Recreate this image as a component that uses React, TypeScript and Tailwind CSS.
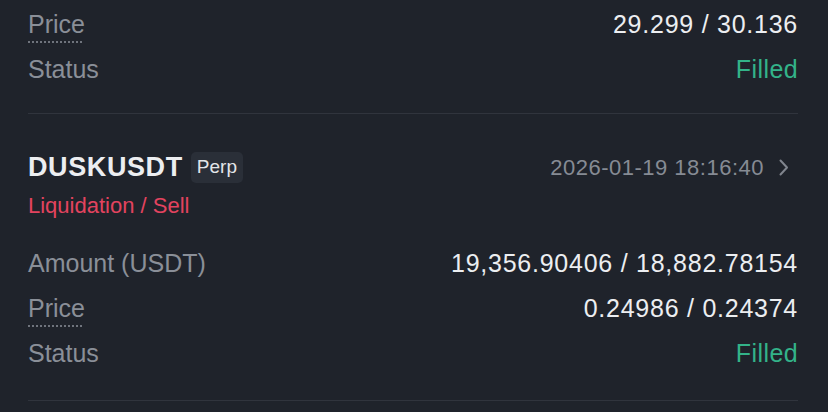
import React from 'react'

type Row = { label: string; value: string; dotted?: boolean; tone?: 'green' | 'white' }

function InfoRow({ label, value, dotted, tone = 'white' }: Row): React.ReactElement {
  return (
    <div className="flex h-[45px] items-center justify-between">
      <span
        className={
          dotted
            ? 'text-[25px] leading-[30px] text-[#8a8f98] underline decoration-dotted decoration-[1.5px] underline-offset-[9px] decoration-[#6f747d]'
            : 'text-[25px] leading-[30px] text-[#8a8f98]'
        }
      >
        {label}
      </span>
      <span
        className={
          tone === 'green'
            ? 'text-[25px] leading-[30px] tracking-[0.4px] text-[#33b389]'
            : 'text-[25px] leading-[30px] tracking-[0.75px] text-[#eceef1]'
        }
      >
        {value}
      </span>
    </div>
  )
}

export default function App(): React.ReactElement {
  return (
    <div
      className="h-[412px] w-[828px] overflow-hidden bg-[#1f232b] pl-[28px] pr-[30px]"
      style={{ fontFamily: '"Liberation Sans", Arial, sans-serif' }}
    >
      {/* previous order (cut off) */}
      <div className="pt-[1px]">
        <InfoRow label="Price" value="29.299 / 30.136" dotted />
        <InfoRow label="Status" value="Filled" tone="green" />
      </div>
      <div className="mt-[22px] h-px bg-[#30343d]" />

      {/* DUSKUSDT order */}
      <div className="mt-[38px] flex h-[31px] items-center justify-between">
        <div className="flex items-center gap-[8px]">
          <span className="text-[27px] font-bold leading-[31px] tracking-[0.6px] text-[#eceef1]">DUSKUSDT</span>
          <span className="flex h-[31px] items-center rounded-[5px] bg-[#2a2f38] px-[6px] text-[19px] text-[#e3e5e8]">
            Perp
          </span>
        </div>
        <div className="flex items-center gap-[15px]">
          <span className="text-[22px] tracking-[0.5px] text-[#868b94]">2026-01-19 18:16:40</span>
          <svg width="10" height="17" viewBox="0 0 10 17" fill="none" className="mr-[9px]">
            <path d="M1.5 1.5 L8 8.5 L1.5 15.5" stroke="#80858e" strokeWidth="2" strokeLinecap="round" strokeLinejoin="round" />
          </svg>
        </div>
      </div>
      <div className="mt-[11px] h-[24px] text-[22px] leading-[24px] text-[#e3435f]">Liquidation / Sell</div>

      <div className="mt-[22px]">
        <InfoRow label="Amount (USDT)" value="19,356.90406 / 18,882.78154" />
        <InfoRow label="Price" value="0.24986 / 0.24374" dotted />
        <InfoRow label="Status" value="Filled" tone="green" />
      </div>
      <div className="mt-[25px] h-px bg-[#30343d]" />
    </div>
  )
}
